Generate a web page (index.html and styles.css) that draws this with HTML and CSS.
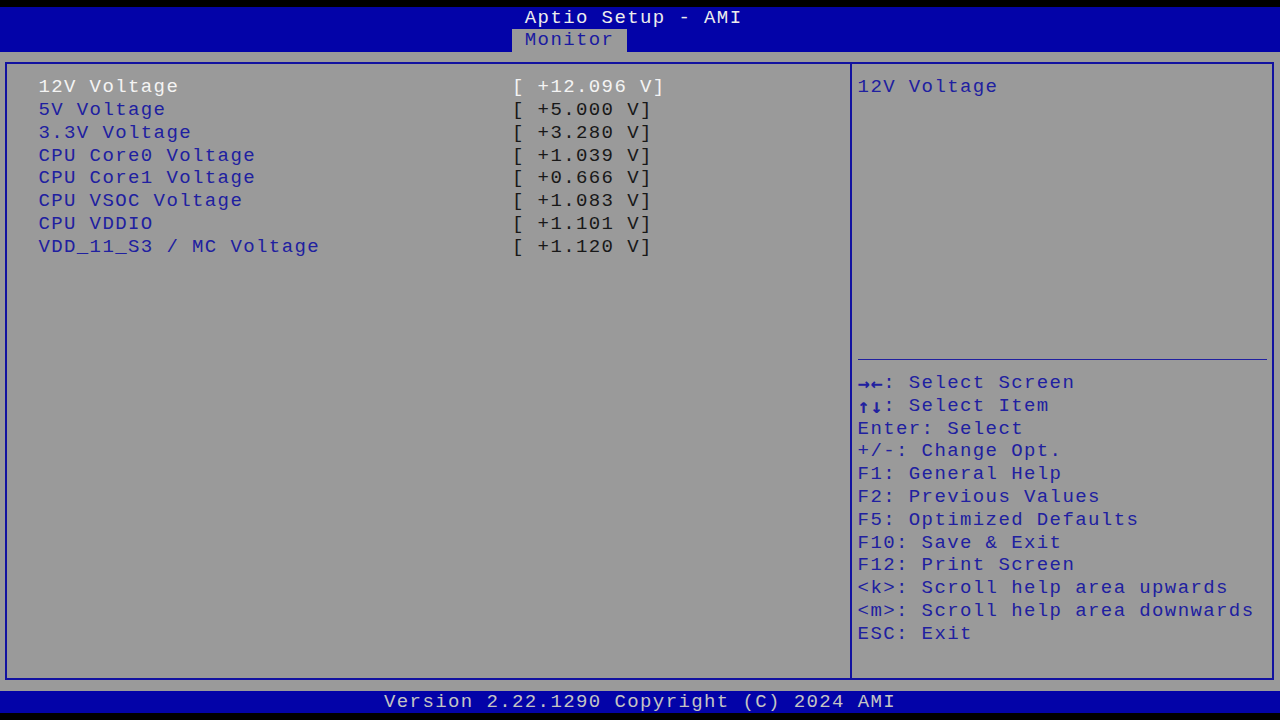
FILE: index.html
```html
<!DOCTYPE html>
<html>
<head>
<meta charset="utf-8">
<link rel="stylesheet" href="styles.css">
</head>
<body>
<div class="screen">
  <header class="top">
    <div class="title">Aptio Setup - AMI</div>
    <div class="tabs"><span class="tab">Monitor</span></div>
  </header>
  <main class="body">
    <div class="frame">
      <section class="left">
        <div class="item selected"><span class="label">12V Voltage</span><span class="value">[ +12.096 V]</span></div>
        <div class="item"><span class="label">5V Voltage</span><span class="value">[ +5.000 V]</span></div>
        <div class="item"><span class="label">3.3V Voltage</span><span class="value">[ +3.280 V]</span></div>
        <div class="item"><span class="label">CPU Core0 Voltage</span><span class="value">[ +1.039 V]</span></div>
        <div class="item"><span class="label">CPU Core1 Voltage</span><span class="value">[ +0.666 V]</span></div>
        <div class="item"><span class="label">CPU VSOC Voltage</span><span class="value">[ +1.083 V]</span></div>
        <div class="item"><span class="label">CPU VDDIO</span><span class="value">[ +1.101 V]</span></div>
        <div class="item"><span class="label">VDD_11_S3 / MC Voltage</span><span class="value">[ +1.120 V]</span></div>
      </section>
      <aside class="right">
        <div class="help-desc">12V Voltage</div>
        <div class="sep"></div>
        <ul class="keys">
          <li><b class="arrow">→←</b>: Select Screen</li>
          <li><b class="arrow">↑↓</b>: Select Item</li>
          <li>Enter: Select</li>
          <li>+/-: Change Opt.</li>
          <li>F1: General Help</li>
          <li>F2: Previous Values</li>
          <li>F5: Optimized Defaults</li>
          <li>F10: Save &amp; Exit</li>
          <li>F12: Print Screen</li>
          <li>&lt;k&gt;: Scroll help area upwards</li>
          <li>&lt;m&gt;: Scroll help area downwards</li>
          <li>ESC: Exit</li>
        </ul>
      </aside>
    </div>
  </main>
  <footer class="foot">Version 2.22.1290 Copyright (C) 2024 AMI</footer>
</div>
</body>
</html>
```
FILE: styles.css
```css
html, body {
  margin: 0;
  padding: 0;
  background: #000;
}
.screen {
  width: 1280px;
  height: 720px;
  padding-top: 6.6px;
  box-sizing: border-box;
  font-family: "Liberation Mono", "DejaVu Sans Mono", monospace;
  font-size: 19px;
  letter-spacing: 1.4px;
  line-height: 22.8px;
  white-space: nowrap;
  overflow: hidden;
}
.top {
  background: #0303a8;
  height: 45.6px;
}
.title {
  height: 22.8px;
  padding-left: 524.8px;
  color: #ececec;
}
.tabs {
  height: 22.8px;
  padding-left: 512px;
}
.tab {
  display: inline-block;
  vertical-align: top;
  background: #9a9a9a;
  color: #1a1aa0;
  padding: 0 12.8px;
  height: 22.8px;
}
.body {
  background: #9a9a9a;
  height: 638.4px;
  padding: 10px 6px 0 5px;
  box-sizing: border-box;
}
.frame {
  display: flex;
  height: 618px;
  border: 2px solid #1212a0;
  box-sizing: border-box;
}
.left {
  flex: none;
  width: 845px;
  border-right: 2px solid #1212a0;
  padding: 12px 0 0 31.4px;
  box-sizing: border-box;
}
.item {
  display: flex;
  height: 22.8px;
  color: #2020a0;
}
.label {
  width: 473.6px;
  flex: none;
}
.value {
  color: #181818;
}
.item.selected .label,
.item.selected .value {
  color: #f4f4f4;
}
.right {
  flex: 1;
  padding: 12px 5px 0 5.6px;
  color: #2020a0;
}
.help-desc {
  height: 273.6px;
}
.sep {
  border-top: 1.5px solid #2020a0;
  margin: 9.6px 0 11.7px;
}
.keys {
  list-style: none;
  margin: 0;
  padding: 0;
}
.keys li {
  height: 22.8px;
}
.arrow {
  font-family: "DejaVu Sans Mono", monospace;
  font-weight: bold;
  letter-spacing: 0.8px;
  font-size: 20px;
  display: inline-block;
  width: 25.6px;
  vertical-align: top;
}
.foot {
  background: #0303a8;
  height: 22.8px;
  padding-left: 384px;
  color: #c4c4c4;
}
```
